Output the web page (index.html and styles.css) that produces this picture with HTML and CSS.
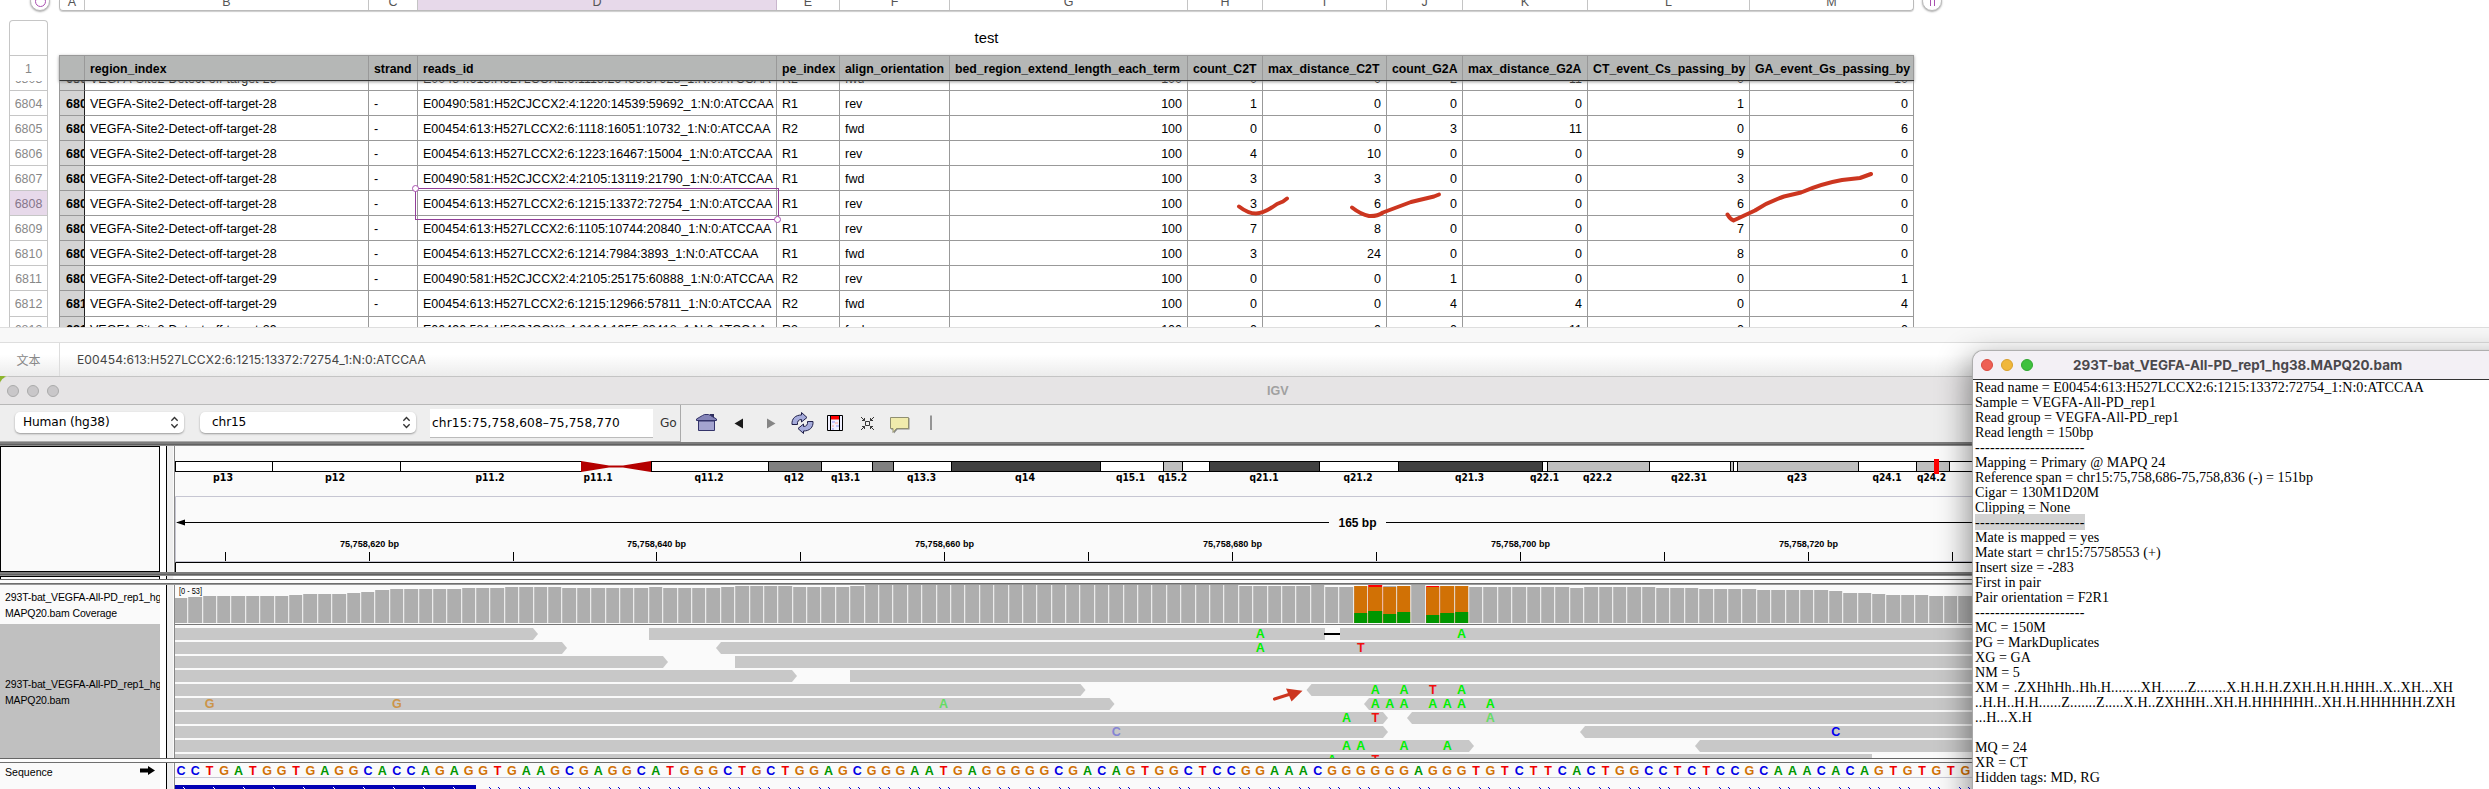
FILE: index.html
```html
<!DOCTYPE html>
<html lang="en">
<head>
<meta charset="utf-8">
<title>IGV</title>
<link rel="stylesheet" href="styles.css">
</head>
<body>
<main class="desktop">
  <section class="sheet">
    <div class="sheet-top">
      <span class="knob"><i class="knob-ring"></i></span>
      <div class="col-letters" id="letters"></div>
      <span class="knob knob-end"><i class="knob-bars"></i></span>
    </div>
    <div class="sheet-title"><span class="num-cap"></span><span class="title-text">test</span></div>
    <div class="sheet-head"><span class="num">1</span><div class="row head-row" id="head"></div></div>
    <div class="sheet-scroll"><div class="rows" id="rows"></div></div>
    <div class="sheet-foot"></div>
  </section>
  <div class="formula">
    <span class="formula-kind">文本</span>
    <span class="formula-value">E00454:613:H527LCCX2:6:1215:13372:72754_1:N:0:ATCCAA</span>
  </div>

  <div class="igv-back">
  <section class="igv">
    <header class="igv-title"><i class="dot"></i><i class="dot"></i><i class="dot"></i><span class="igv-name">IGV</span></header>
    <div class="toolbar">
      <div class="tool-main">
        <span class="select genome">Human (hg38)<svg class="updown" viewBox="0 0 10 14"><path d="M1.5 5 5 1.5 8.5 5M1.5 9 5 12.5 8.5 9"/></svg></span>
        <span class="select chrom">chr15<svg class="updown" viewBox="0 0 10 14"><path d="M1.5 5 5 1.5 8.5 5M1.5 9 5 12.5 8.5 9"/></svg></span>
        <span class="locus">chr15:75,758,608–75,758,770</span>
        <span class="go">Go</span>
      </div>
      <svg class="tools" viewBox="690 405 260 36" width="260" height="36">
        <path d="M710 414h4v6h-4z" fill="#2e2e5c"/>
        <path d="M696.500 420.500V419l6-3.500 2-1h4l2 1 6 3.500v1.500z" fill="#8484b8" stroke="#34346a"/>
        <path d="M698.500 421h16v9.500h-16z" fill="#a4a4d0" stroke="#34346a"/>
        <path d="M743 418.500v10l-8.500-5z" fill="#1a1a1a"/>
        <path d="M767 418.500v10l8.500-5z" fill="#858585"/>
        <path id="turn" d="M792 424.500C791.500 418.500 795.500 415 801.500 415V412.500L807 417.500 801.500 422V419.500C798.500 419.500 797 421.500 797.500 424.500z" fill="#a6acdc" stroke="#20204a"/>
        <use href="#turn" transform="rotate(180 802.500 423)"/>
        <path d="M827.500 415.500h15v15h-15z" fill="#f0f0ff" stroke="#000"/>
        <path d="M831 416h8.500v3.500H831z" fill="#f00"/>
        <path d="M830.500 416v14M839.500 416v14" stroke="#000"/>
        <path d="M832 421h3v2h-3zM836 425h3v2h-3zM832 428h2v2h-2z" fill="#c0c0f8"/><path d="M835 422h3v2h-3zM832 425h2v2h-2z" fill="#f8c8c8"/>
        <path d="M865.500 421.500h4v4h-4zM861 417l3.500 3.500M874 417l-3.500 3.500M861 430l3.500-3.500M874 430l-3.500-3.500M864.500 418v2.500H862M870.500 418v2.500H873M864.500 429v-2.500H862M870.500 429v-2.500H873" fill="none" stroke="#222" stroke-width=".9"/>
        <path d="M891 418h18.500v11.500h-12l-3.500 4v-4H891z" fill="#888"/>
        <path d="M890.500 417.500h18v11h-12l-3.500 4v-4h-2.500z" fill="#f0ebac" stroke="#908f70"/>
        <path d="M931 415.500v14.500" stroke="#777" stroke-width="1.500"/>
      </svg>
    </div>
    <div class="splitter"></div>
    <div class="panel panel-ruler"><div class="names names-box"></div><div class="gutter"></div><svg id="ruler" class="chart" viewBox="174 446 1799 126" width="1799" height="126"></svg></div>
    <div class="splitter"></div>
    <div class="panel panel-empty"><div class="names names-box"></div><div class="gutter"></div></div>
    <div class="seam"></div>
    <div class="panel panel-tracks">
      <div class="names">
        <div class="name name-cov">293T-bat_VEGFA-All-PD_rep1_hg38.<br>MAPQ20.bam Coverage</div>
        <div class="name name-bam">293T-bat_VEGFA-All-PD_rep1_hg38.<br>MAPQ20.bam</div>
      </div>
      <div class="gutter"></div>
      <svg id="tracks" class="chart" viewBox="174 585 1799 173" width="1799" height="173"></svg>
    </div>
    <div class="seam"></div>
    <div class="panel panel-seq">
      <div class="names seq-name">Sequence<svg class="seq-arrow" viewBox="0 0 15 9" width="15" height="9"><path d="M0 2.500h8V0l7 4.500L8 9V6.500H0z"/></svg></div>
      <div class="gutter"></div>
      <svg id="seq" class="chart" viewBox="174 763 1799 26" width="1799" height="26"></svg>
    </div>
  </section>
  </div>

  <section class="popup">
    <header class="popup-title"><i class="dot red"></i><i class="dot yellow"></i><i class="dot green"></i><span class="popup-name">293T-bat_VEGFA-All-PD_rep1_hg38.MAPQ20.bam</span></header>
    <div class="popup-body">
      <p>Read name = E00454:613:H527LCCX2:6:1215:13372:72754_1:N:0:ATCCAA</p>
      <p>Sample = VEGFA-All-PD_rep1</p>
      <p>Read group = VEGFA-All-PD_rep1</p>
      <p>Read length = 150bp</p>
      <p class="dashes">----------------------</p>
      <p>Mapping = Primary @ MAPQ 24</p>
      <p>Reference span = chr15:75,758,686-75,758,836 (-) = 151bp</p>
      <p>Cigar = 130M1D20M</p>
      <p>Clipping = None</p>
      <p class="dashes"><mark>----------------------</mark></p>
      <p>Mate is mapped = yes</p>
      <p>Mate start = chr15:75758553 (+)</p>
      <p>Insert size = -283</p>
      <p>First in pair</p>
      <p>Pair orientation = F2R1</p>
      <p class="dashes">----------------------</p>
      <p>MC = 150M</p>
      <p>PG = MarkDuplicates</p>
      <p>XG = GA</p>
      <p>NM = 5</p>
      <p class="calls">XM = .ZXHhHh..Hh.H........XH.......Z........X.H.H.H.ZXH.H.H.HHH..X..XH...XH</p>
      <p class="calls">..H.H..H.H......Z.......Z.....X.H..ZXHHH..XH.H.HHHHHH..XH.H.HHHHHH.ZXH</p>
      <p class="calls">...H...X.H</p>
      <p>&nbsp;</p>
      <p>MQ = 24</p>
      <p>XR = CT</p>
      <p>Hidden tags: MD, RG</p>
    </div>
  </section>

  <svg class="notes" viewBox="0 0 2489 789" width="2489" height="789">
    <g class="pen">
      <path d="M1239 206.500Q1248 213.500 1256 213.500T1277 204L1283 201.500 1287 198.500"/>
      <path d="M1352 207.500Q1361 214.500 1369 216Q1377 216.500 1383 212.500L1411 202 1434 196.500 1439 194.500"/>
      <path d="M1727.500 214.500Q1730 219 1733.500 220.500L1755 210.500Q1768 202 1784 196.500L1801 192.500Q1822 183.500 1842 180L1860 178 1871 174"/>
      <path class="pen-thin" d="M1274.500 699 1292 693.500"/>
    </g>
    <path class="pen-head" d="M1302.500 690.700 1286 688.500 1291.500 701.500z"/>
  </svg>
</main>
<script src="app.js"></script>
</body>
</html>
```

FILE: styles.css
```css
* { box-sizing: border-box; }
body { margin: 0; background: #fff; font-family: "Liberation Sans", Arial, sans-serif; color: #000; overflow: hidden; }
.desktop { position: relative; width: 2489px; height: 789px; overflow: hidden; background: #fff; }

/* spreadsheet */
.sheet { height: 343px; display: flex; flex-direction: column; position: relative; }
.sheet-top { height: 20px; display: flex; align-items: flex-start; flex: none; }
.knob { width: 20px; height: 20px; margin: -9px 9px 0 30px; border-radius: 50%; border: 1px solid #bbb; background: #fff; box-shadow: 0 1px 2px #aaa; display: flex; justify-content: center; align-items: center; flex: none; }
.knob-end { margin: -9px 0 0 8px; }
.knob-ring { width: 11px; height: 11px; border: 1.5px solid #a94fb0; border-radius: 50%; }
.knob-bars { width: 5px; height: 9px; border: solid #a94fb0; border-width: 0 1.3px; }
.col-letters, .row { display: grid; grid-template-columns: 25px 284px 49px 359px 63px 110px 238px 75px 124px 76px 125px 162px 164px; }
.col-letters { height: 11px; border: solid #bbb; border-width: 0 1px 1px; border-radius: 0 0 4px 4px; box-shadow: 0 1px 1px #ccc; overflow: hidden; width: 1855px; }
.col-letters span { height: 11px; line-height: 5px; text-align: center; font-size: 12.5px; color: #555; border-right: 1px solid #c4c4c4; }
.col-letters span.on { background: #e7d9ea; border-color: #c9b6cd; }
.sheet-title { height: 35px; display: flex; flex: none; }
.num-cap { width: 39px; margin-left: 9px; border: solid #c6c6c6; border-width: 1px 1px 0; border-radius: 4px 4px 0 0; }
.title-text { width: 1855px; margin-left: 11px; text-align: center; font-size: 14.8px; line-height: 37px; }
.sheet-head { height: 26px; display: flex; flex: none; position: relative; z-index: 1; }
.sheet-head .num { background: #fff; }
.num { width: 39px; margin-left: 9px; margin-right: 11px; border: solid #c6c6c6; border-width: 1px 1px 0; text-align: center; color: #888; font-size: 12.4px; line-height: 26px; flex: none; }
.num.on { background: #e7d9ea; color: #85768a; }
.row span { padding: 0 5px; border-right: 1px solid #999; border-top: 1px solid #999; line-height: 26px; font-size: 12.5px; white-space: nowrap; overflow: hidden; }
.head-row { height: 26px; background: #b5b7b6; border-left: 1px solid #999; border-bottom: 1px solid #333; box-shadow: 0 1px 3px #999; }
.head-row span { font-weight: bold; font-size: 12.3px; line-height: 27px; }
.sheet-scroll { height: 246px; overflow: hidden; flex: none; }
.rows { margin-top: -16px; }
.line { display: flex; height: 25px; }
.line.tall { height: 26px; }
.line .row { border-left: 1px solid #999; }
.line .row .a { background: #d4d4d4; font-weight: bold; border-right-color: #222; text-overflow: clip; padding-left: 6px; padding-right: 0; }
.line .row .n { text-align: right; padding-right: 5px; }
.line .row .sel { overflow: visible; position: relative; }
.sel::before { content: ""; position: absolute; left: -3px; top: -3px; right: -3px; bottom: -3px; border: 1.5px solid #923f98; }
.grip { position: absolute; width: 7px; height: 7px; border: 1px solid #a94fb0; background: #fff; border-radius: 50%; }
.grip.tl { left: -6px; top: -6px; }
.grip.br { right: -5px; bottom: -6px; }
.sheet-foot { height: 16px; background: #f8f8f8; border-top: 1px solid #dedede; border-bottom: 1px solid #dedede; flex: none; }
.formula { height: 33px; display: flex; background: linear-gradient(#fff 35%, #ececec); line-height: 33px; }
.formula-kind { width: 60px; text-align: center; color: #888; border-right: 1px solid #ddd; font-family: "Noto Sans CJK SC", sans-serif; font-size: 12px; padding-right: 2px; }
.formula-value { padding-left: 17px; color: #444; font-family: Inter, sans-serif; font-size: 12.1px; letter-spacing: .09px; }

/* IGV window */
.igv-back { width: 1973px; background: linear-gradient(90deg, #8db52c 4px, #ececec 8px); }
.igv { width: 1973px; height: 413px; background: #fafafa; border-top: 1px solid #c4c4c4; border-radius: 9px 0 0 0; overflow: hidden; }
.igv-title { height: 27px; background: #e6e4e5; display: flex; align-items: center; position: relative; padding-left: 7px; gap: 8px; }
.dot { width: 12px; height: 12px; border-radius: 50%; background: #c9c7c9; border: 1px solid #aaa; flex: none; }
.igv-name { margin-left: 1200px; font: bold 12.5px "Liberation Sans", sans-serif; color: #a0a0a0; }
.toolbar { height: 38px; background: #eee; border-top: 1px solid #b8b8b8; display: flex; gap: 9px; }
.tool-main { width: 681px; height: 37px; border: solid #aaa; border-width: 0 1px 1px 0; display: flex; align-items: center; padding-left: 15px; font-family: "DejaVu Sans", sans-serif; font-size: 12.2px; letter-spacing: -.15px; }
.select { height: 21px; background: #fff; border-radius: 5px; box-shadow: 0 1px 2px #999; display: flex; align-items: center; justify-content: space-between; padding: 0 5px 0 8px; margin-top: -2px; }
.genome { width: 169px; margin-right: 16px; }
.chrom { width: 216px; padding-left: 12px; margin-right: 14px; }
.updown { width: 9px; height: 13px; fill: none; stroke: #333; stroke-width: 1.5; }
.locus { width: 223px; height: 29px; background: #fff; border-bottom: 1px solid #bbb; line-height: 29px; padding-left: 2px; letter-spacing: .12px; }
.go { margin-left: 7px; color: #333; }
.splitter { height: 4px; background: linear-gradient(#7c7c7c 2px, #606060 2px, #606060 3px, #8c8c8c 3px); }
.panel { display: grid; grid-template-columns: 160px 14px 1799px; }
.names { overflow: hidden; background: #fafafa; }
.names-box { border: 1px solid #000; }
.gutter { background: linear-gradient(90deg, #fff 6px, #000 6px, #000 7px, #eee 7px, #eee 13px, #fafafa 13px); }
.panel-ruler { height: 126px; }
.panel-empty { height: 3px; background: #fff; }
.panel-empty .names-box { border-bottom: 0; }
.seam { height: 6px; background: linear-gradient(#666 1px, #fcfcfc 1px, #fcfcfc 4px, #666 4px, #777 5px, #999 5px); }
.panel-tracks { height: 173px; }
.name { font-size: 10.5px; letter-spacing: -.13px; line-height: 16px; padding: 4px 0 0 5px; white-space: nowrap; overflow: hidden; }
.name-cov { height: 39px; }
.name-bam { height: 134px; background: #c0c0c0; padding-top: 52px; }
.panel-seq { height: 27px; }
.panel-tracks + .seam { height: 5px; }
.seq-name { display: flex; justify-content: space-between; font-size: 10.6px; line-height: 18px; padding: 0 5px; }
.seq-arrow { margin-top: 3px; }
.chart { display: block; background: #fafafa; }
.chart text { font-family: "Liberation Sans", sans-serif; text-anchor: middle; }
.chart .band { font: bold 10.5px "DejaVu Sans", sans-serif; }
.chart .tick { font-weight: bold; font-size: 9.5px; }
.chart .span { font-weight: bold; font-size: 12px; }
.chart .base { font-weight: bold; font-size: 12.5px; }
.chart .range { font-size: 9px; text-anchor: start; }

/* read details window */
.popup { position: absolute; left: 1973px; top: 351px; width: 560px; height: 470px; background: #fff; border-radius: 10px 0 0 0; box-shadow: 0 0 1px 1px #aaa, -4px 8px 32px rgba(0,0,0,.45); overflow: visible; }
.popup-title { height: 29px; background: #f3f0f5; border-bottom: 1px solid #333; border-radius: 10px 0 0 0; display: flex; align-items: center; gap: 8px; padding-left: 8px; }
.red { background: #ee5f54; border-color: #d9493f; }
.yellow { background: #f0b73a; border-color: #d8a02c; }
.green { background: #3fc13f; border-color: #30a830; }
.popup-name { margin-left: 32px; font: bold 13.4px Inter, sans-serif; color: #4a484c; white-space: nowrap; }
.popup-body { padding: 0 2px; font: 14.1px/15px "Liberation Serif", "Times New Roman", serif; }
.popup-body p { margin: 0; height: 15px; white-space: pre; }
.popup-body p:not([class]) { letter-spacing: .02px; }
.popup-body .dashes { letter-spacing: .3px; }
.popup-body .calls { letter-spacing: .2px; }
.dashes mark { background: #d2d2d2; color: inherit; }
.notes { position: absolute; left: 0; top: 0; pointer-events: none; }
.pen { fill: none; stroke: #cc3620; stroke-width: 4; stroke-linecap: round; stroke-linejoin: round; }
.pen .pen-thin { stroke-width: 3.2; }
.pen-head { fill: #cc3620; }
```

FILE: app.js
```js
const byId = (id) => document.getElementById(id);

/* spreadsheet */
byId('letters').innerHTML = [...'ABCDEFGHIJKLM']
  .map((c) => `<span class="${c === 'D' ? 'on' : ''}">${c}</span>`).join('');

const heads = ['', 'region_index', 'strand', 'reads_id', 'pe_index', 'align_orientation',
  'bed_region_extend_length_each_term', 'count_C2T', 'max_distance_C2T', 'count_G2A',
  'max_distance_G2A', 'CT_event_Cs_passing_by', 'GA_event_Gs_passing_by'];
byId('head').innerHTML = heads.map((h) => `<span>${h}</span>`).join('');

const rows = [
  [6803, 28, 'E00454:613:H527LCCX2:6:1118:26438:37928', 'R2', 'fwd', 0, 0, 2, 11, 0, 10],
  [6804, 28, 'E00490:581:H52CJCCX2:4:1220:14539:59692', 'R1', 'rev', 1, 0, 0, 0, 1, 0],
  [6805, 28, 'E00454:613:H527LCCX2:6:1118:16051:10732', 'R2', 'fwd', 0, 0, 3, 11, 0, 6],
  [6806, 28, 'E00454:613:H527LCCX2:6:1223:16467:15004', 'R1', 'rev', 4, 10, 0, 0, 9, 0],
  [6807, 28, 'E00490:581:H52CJCCX2:4:2105:13119:21790', 'R1', 'fwd', 3, 3, 0, 0, 3, 0],
  [6808, 28, 'E00454:613:H527LCCX2:6:1215:13372:72754', 'R1', 'rev', 3, 6, 0, 0, 6, 0],
  [6809, 28, 'E00454:613:H527LCCX2:6:1105:10744:20840', 'R1', 'rev', 7, 8, 0, 0, 7, 0],
  [6810, 28, 'E00454:613:H527LCCX2:6:1214:7984:3893', 'R1', 'fwd', 3, 24, 0, 0, 8, 0],
  [6811, 29, 'E00490:581:H52CJCCX2:4:2105:25175:60888', 'R2', 'rev', 0, 0, 1, 0, 0, 1],
  [6812, 29, 'E00454:613:H527LCCX2:6:1215:12966:57811', 'R2', 'fwd', 0, 0, 4, 4, 0, 4],
  [6813, 29, 'E00490:581:H52CJCCX2:4:2104:1955:63418', 'R2', 'fwd', 0, 0, 0, 11, 0, 0],
];
byId('rows').innerHTML = rows.map((r) => {
  const sel = r[0] === 6808;
  const cells = [
    `<span class="a">${String(r[0] - 2)}</span>`,
    `<span>VEGFA-Site2-Detect-off-target-${r[1]}</span>`,
    '<span>-</span>',
    `<span class="${sel ? 'sel' : ''}">${r[2]}_1:N:0:ATCCAA${sel ? '<i class="grip tl"></i><i class="grip br"></i>' : ''}</span>`,
    `<span>${r[3]}</span>`, `<span>${r[4]}</span>`, '<span class="n">100</span>',
    ...r.slice(5).map((v) => `<span class="n">${v}</span>`),
  ].join('');
  return `<div class="line${r[0] === 6812 ? ' tall' : ''}"><span class="num${sel ? ' on' : ''}">${r[0]}</span><div class="row">${cells}</div></div>`;
}).join('');

/* chart helpers */
const rect = (x, y, w, h, f) => `<rect x="${x}" y="${y}" width="${w}" height="${h}" fill="${f}"/>`;
const text = (c, x, y, s, f = '#000', len = 0) =>
  `<text class="${c}" x="${x}" y="${y}" fill="${f}"${len ? ` textLength="${len}" lengthAdjust="spacingAndGlyphs"` : ''}>${s}</text>`;
const STEP = 14.39;
const centre = (k) => 180.9 + STEP * k;

/* ideogram and ruler */
const W = '#fff', L = '#bfbfbf', M = '#808080', D = '#404040';
const bands = [[175, 272, W], [272, 400, W], [400, 581, W], [651, 768, W], [768, 821, M], [821, 872, W],
  [872, 893, M], [893, 951, W], [951, 1100, D], [1100, 1163, W], [1163, 1182, L], [1182, 1209, W],
  [1209, 1319, D], [1319, 1398, W], [1398, 1542, D], [1542, 1547, W], [1547, 1649, L], [1649, 1730, W],
  [1730, 1733, L], [1733, 1737, W], [1737, 1858, L], [1858, 1916, W], [1916, 1949, L], [1949, 2010, W]];
let g = bands.map(([a, b, f]) => `<rect x="${a + .5}" y="461.500" width="${b - a}" height="10" fill="${f}" stroke="#000"/>`).join('');
g += '<path d="M581 461 609 465.500H623L651 461V472L623 467.500H609L581 472z" fill="#b40000"/>';
[['p13', 223, 20], ['p12', 335, 20], ['p11.2', 490], ['p11.1', 598], ['q11.2', 709], ['q12', 794, 20],
  ['q13.1', 845.5], ['q13.3', 921.5], ['q14', 1025, 20], ['q15.1', 1130.500], ['q15.2', 1172.500], ['q21.1', 1264],
  ['q21.2', 1358], ['q21.3', 1469.500], ['q22.1', 1544.500], ['q22.2', 1597.500], ['q22.31', 1689, 36],
  ['q23', 1797, 20], ['q24.1', 1887], ['q24.2', 1931.500]].forEach(([s, x, w]) => { g += text('band', x, 481, s, '#000', w || 29); });
g += rect(1934, 459, 5, 15, '#f00');
g += '<path d="M175.500 562V496.500H1973" fill="none" stroke="#c6c6d2"/><path d="M176 561.500H1973" stroke="#c6c6d2"/>';
g += '<path d="M174.500 446V572" stroke="#888"/><path d="M175.500 572V562.500H1973M177 522.500H1329M1386 522.500H1973" fill="none" stroke="#000"/>';
g += '<path d="M176 522.500 185 519.500V525.500z"/>' + text('span', 1357.500, 527, '165 bp', '#000', 38);
for (let i = 0; i < 13; i++) {
  const x = Math.floor(225.2 + 143.93 * i) + .5;
  g += `<path d="M${x} 552V561" stroke="#000"/>`;
  if (i % 2) g += text('tick', x, 547, `75,758,${610 + i * 10} bp`, '#000', 59);
}
byId('ruler').innerHTML = g;

/* coverage */
const tops = [[1, 598], [1, 597], [6, 596], [1, 595], [3, 594], [1, 593], [1, 592], [1, 590], [5, 589], [3, 588],
  [4, 587], [6, 588], [1, 587], [4, 588], [1, 587], [4, 586], [4, 587], [1, 586], [26, 585], [5, 586], [1, 585],
  [2, 587], [1, 586], [1, 585], [1, 586], [1, 586], [1, 585], [1, 586], [1, 586], [1, 586], [7, 587], [1, 588],
  [5, 587], [3, 588], [4, 589], [5, 590], [1, 591], [2, 593], [1, 594], [3, 595], [4, 596]];
const mixed = { 82: [586, 613], 83: [587, 611, 1], 84: [587, 614], 85: [586, 612], 87: [587, 615, 1], 88: [586, 613], 89: [586, 612] };
let t = '', k = 0;
tops.forEach(([n, y]) => {
  for (let i = 0; i < n; i++, k++) {
    const x = k ? Math.round(centre(k) - 7) + .2 : 175;
    const w = Math.round(centre(k + 1) - 7) - x - .8;
    const m = mixed[k];
    t += rect(x, y, w, 623 - y, m && m[2] ? '#f00' : '#aeaeae');
    if (m) t += rect(x, m[0], w, 623 - m[0], '#d17105') + rect(x, m[1], w, 623 - m[1], '#009600');
  }
});
t += rect(174, 624, 1799, 1, '#777') + text('range', 179, 594, '[0 - 53]', '#000', 23);

/* reads: [start, end, left tip, right tip] */
const E = 1980;
const reads = [
  [[175, 538, 0, 1], [649, 1325], [1340, E]],
  [[175, 567, 0, 1], [716, E, 1]],
  [[175, 668, 0, 1], [735, E]],
  [[175, 797, 0, 1], [850, E]],
  [[175, 1085.5, 0, 1], [1306.5, E, 1]],
  [[175, 1114.5, 0, 1], [1364, E, 1]],
  [[175, 1388, 0, 1], [1407, E, 1]],
  [[175, 1388, 0, 1], [1580, E, 1]],
  [[175, 1474, 0, 1], [1695, E, 1]],
  [[175, 1872]],
];
reads.forEach((list, r) => list.forEach(([a, b, l, q]) => {
  const y = 628 + r * 14;
  t += `<path d="M${l ? a + 5 : a} ${y}H${q ? b - 5 : b}${q ? `L${b} ${y + 6}L${b - 5} ${y + 12}` : `V${y + 12}`}H${l ? a + 5 : a}${l ? `L${a} ${y + 6}` : ''}z" fill="#c8c8c8"/>`;
}));
t += rect(1324, 633, 16, 2, '#000');
const A = '#00f000', T = '#f01010', C = '#0000f0';
[[0, 75, 'A', A], [0, 89, 'A', A], [1, 75, 'A', A], [1, 82, 'T', T], [4, 83, 'A', A], [4, 85, 'A', A], [4, 87, 'T', T],
  [4, 89, 'A', A], [5, 2, 'G', '#cc9448'], [5, 15, 'G', '#cc9448'], [5, 53, 'A', '#64dc64'], [5, 83, 'A', A],
  [5, 84, 'A', A], [5, 85, 'A', A], [5, 87, 'A', A], [5, 88, 'A', A], [5, 89, 'A', A], [5, 91, 'A', A], [6, 81, 'A', A],
  [6, 83, 'T', T], [6, 91, 'A', '#64dc64'], [7, 65, 'C', '#8484d4'], [7, 115, 'C', C], [8, 81, 'A', A], [8, 82, 'A', A],
  [8, 85, 'A', A], [8, 88, 'A', A], [9, 80, 'A', A], [9, 83, 'T', T],
].forEach(([r, i, s, f]) => { t += text('base', centre(i), 638 + r * 14, s, f); });
t += rect(174, 585, 1, 173, '#888');
byId('tracks').innerHTML = t;

/* reference sequence */
const bases = 'CCTGATGGTGAGGCACCAGAGGTGAAGCGAGGCATG' +
  'GGCTGCTGGAGCGGGAATGAGGGGGCGACAGTGGCTCCGGAAACGGGG' +
  'GGAGGGTGTCTTCACTGGCCTCTCCGCAAACACAGTGTGTG';
const ink = { A: '#009600', C: '#0000e6', G: '#d17105', T: '#f00000' };
let s = [...bases].map((b, i) => text('base', centre(i), 775, b, ink[b])).join('');
s += rect(175, 777, 1798, 1, '#c6c6d2') + rect(175, 785, 301, 4, '#0000b4') + rect(174, 763, 1, 26, '#888');
for (let x = 183; x < 470; x += 30) s += `<path d="M${x} 787l2 2" stroke="#fff"/>`;
for (let x = 489; x < 1973; x += 30) s += `<path d="M${x} 787l2 2M${x + 9} 787l2 2" stroke="#0000d0"/>`;
byId('seq').innerHTML = s;
```
